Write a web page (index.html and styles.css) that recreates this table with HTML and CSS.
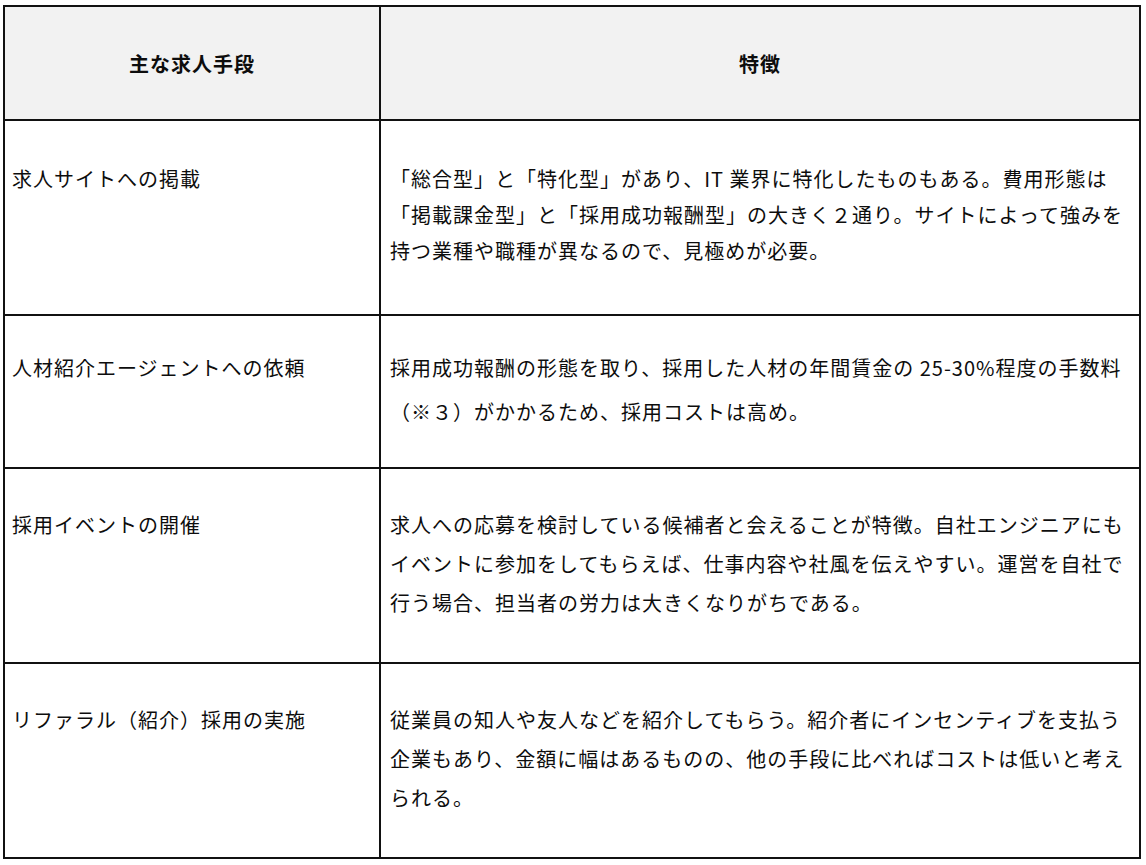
FILE: index.html
```html
<!DOCTYPE html>
<html lang="ja">
<head>
<meta charset="utf-8">
<title>主な求人手段</title>
<link rel="stylesheet" href="styles.css">
</head>
<body>
<table class="methods">
  <colgroup>
    <col class="col-method">
    <col class="col-feature">
  </colgroup>
  <thead>
    <tr class="row-head">
      <th>主な求人手段</th>
      <th>特徴</th>
    </tr>
  </thead>
  <tbody>
    <tr class="row-1">
      <td class="method">求人サイトへの掲載</td>
      <td class="feature">「総合型」と「特化型」があり、IT&nbsp;業界に特化したものもある。費用形態は<br>「掲載課金型」と「採用成功報酬型」の大きく２通り。サイトによって強みを<br>持つ業種や職種が異なるので、見極めが必要。</td>
    </tr>
    <tr class="row-2">
      <td class="method">人材紹介エージェントへの依頼</td>
      <td class="feature">採用成功報酬の形態を取り、採用した人材の年間賃金の&nbsp;25-30%程度の手数料<br>（※３）がかかるため、採用コストは高め。</td>
    </tr>
    <tr class="row-3">
      <td class="method">採用イベントの開催</td>
      <td class="feature">求人への応募を検討している候補者と会えることが特徴。自社エンジニアにも<br>イベントに参加をしてもらえば、仕事内容や社風を伝えやすい。運営を自社で<br>行う場合、担当者の労力は大きくなりがちである。</td>
    </tr>
    <tr class="row-3">
      <td class="method">リファラル（紹介）採用の実施</td>
      <td class="feature">従業員の知人や友人などを紹介してもらう。紹介者にインセンティブを支払う<br>企業もあり、金額に幅はあるものの、他の手段に比べればコストは低いと考え<br>られる。</td>
    </tr>
  </tbody>
</table>
</body>
</html>
```

FILE: styles.css
```css
html, body {
  margin: 0;
  padding: 0;
  background: #ffffff;
}

body {
  padding: 5px 0 0 3px;
  font-family: "Noto Sans CJK JP", "Noto Sans", "Liberation Sans", sans-serif;
  color: #0d0d0d;
}

.methods {
  width: 1138px;
  border-collapse: collapse;
  table-layout: fixed;
  border: 2px solid #111111;
}

.col-method {
  width: 376px;
}

.methods th,
.methods td {
  border: 2px solid #111111;
  font-size: 20px;
  letter-spacing: 1px;
  text-align: left;
  white-space: nowrap;
}

.row-head th {
  height: 112px;
  background: #f2f2f2;
  text-align: center;
  font-weight: 700;
  vertical-align: middle;
  line-height: 39px;
  padding: 0;
}

.methods td {
  vertical-align: top;
  box-sizing: border-box;
}

.methods td.method {
  padding-left: 7px;
}

.methods td.feature {
  padding-left: 9px;
}

.row-1 td {
  height: 195px;
  line-height: 36px;
  padding-top: 40px;
}

.row-2 td {
  height: 153px;
  line-height: 44px;
  padding-top: 30px;
}

.row-3 td {
  height: 195px;
  line-height: 39px;
  padding-top: 36px;
}
```
